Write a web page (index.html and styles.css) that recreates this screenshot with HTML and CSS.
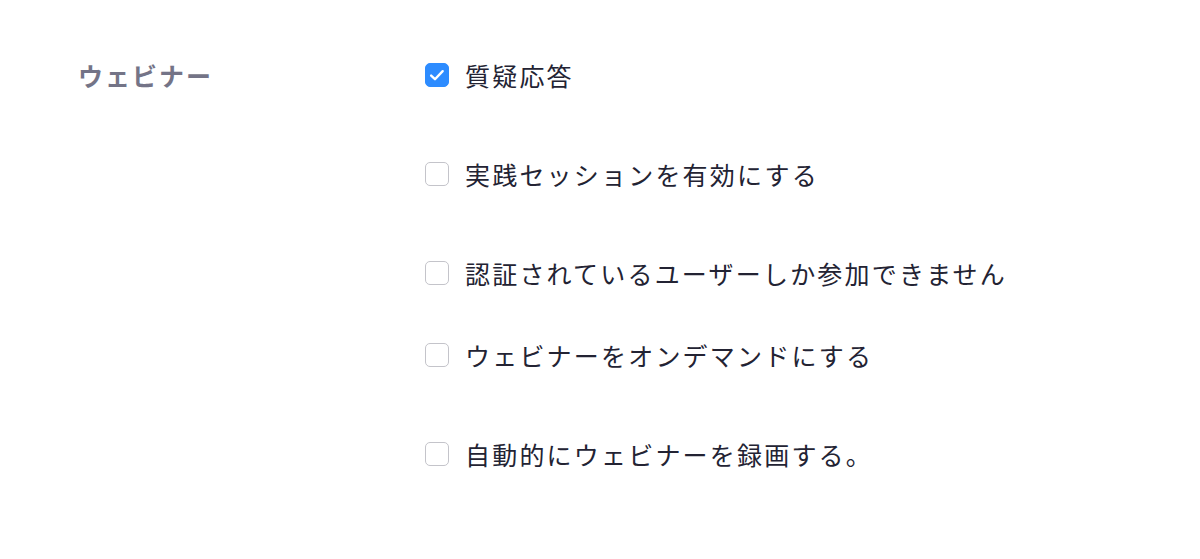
FILE: index.html
```html
<!DOCTYPE html>
<html lang="ja">
<head>
<meta charset="utf-8">
<link rel="stylesheet" href="styles.css">
</head>
<body>
<div class="page">
  <div class="section">
    <div class="section-label">ウェビナー</div>
    <div class="options">
      <label class="option">
        <span class="box checked">
          <svg viewBox="0 0 24 24" width="24" height="24"><path d="M5.6 12.6l4.2 4 8.4-8.8" fill="none" stroke="#fff" stroke-width="2.6" stroke-linecap="round" stroke-linejoin="round"/></svg>
        </span>
        <span class="text">質疑応答</span>
      </label>
      <label class="option">
        <span class="box"></span>
        <span class="text">実践セッションを有効にする</span>
      </label>
      <label class="option short">
        <span class="box"></span>
        <span class="text">認証されているユーザーしか参加できません</span>
      </label>
      <label class="option">
        <span class="box"></span>
        <span class="text">ウェビナーをオンデマンドにする</span>
      </label>
      <label class="option">
        <span class="box"></span>
        <span class="text">自動的にウェビナーを録画する。</span>
      </label>
    </div>
  </div>
</div>
</body>
</html>
```

FILE: styles.css
```css
html, body {
  margin: 0;
  padding: 0;
  background: #ffffff;
}
body {
  font-family: "Noto Sans CJK JP", "Noto Sans", sans-serif;
}
.page {
  padding: 57px 0 0 78px;
}
.section {
  display: flex;
}
.section-label {
  width: 347px;
  font-size: 25px;
  font-weight: 700;
  color: #747487;
  letter-spacing: 2px;
  line-height: 36px;
}
.options {
  display: flex;
  flex-direction: column;
}
.option {
  display: flex;
  align-items: center;
  height: 36px;
  margin-bottom: 63px;
}
.option.short {
  margin-bottom: 46px;
}
.box {
  box-sizing: border-box;
  width: 24px;
  height: 24px;
  border: 1.5px solid #c4c4ca;
  border-radius: 5px;
  display: flex;
  align-items: center;
  justify-content: center;
  flex-shrink: 0;
}
.box.checked {
  background: #2d8cff;
  border-color: #2d8cff;
}
.box svg {
  display: block;
  width: 24px;
  height: 24px;
}
.text {
  margin-left: 16px;
  font-size: 25px;
  color: #232333;
  letter-spacing: 2.2px;
  line-height: 36px;
}
```
